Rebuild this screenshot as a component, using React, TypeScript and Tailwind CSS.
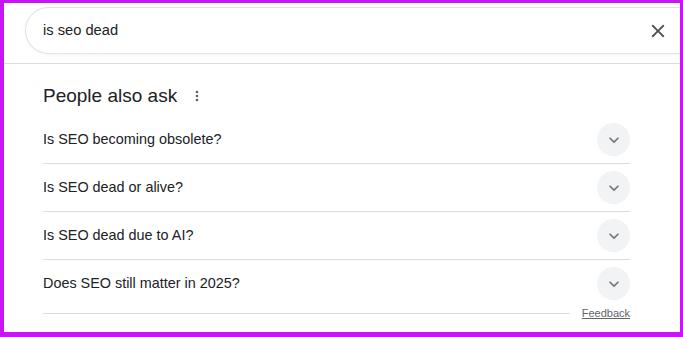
/* ── People also ask – search header + expandable questions ── */

const questions = [
  'Is SEO becoming obsolete?',
  'Is SEO dead or alive?',
  'Is SEO dead due to AI?',
  'Does SEO still matter in 2025?',
];

function CloseIcon() {
  return (
    <svg width="22" height="22" viewBox="0 0 24 24" fill="#4d5156">
      <path d="M19 6.41 17.59 5 12 10.59 6.41 5 5 6.41 10.59 12 5 17.59 6.41 19 12 13.41 17.59 19 19 17.59 13.41 12z" />
    </svg>
  );
}

function MoreIcon() {
  return (
    <svg width="16" height="16" viewBox="0 0 24 24" fill="#5f6368">
      <circle cx="12" cy="6" r="2" />
      <circle cx="12" cy="12" r="2" />
      <circle cx="12" cy="18" r="2" />
    </svg>
  );
}

function ChevronDown() {
  return (
    <svg width="20" height="20" viewBox="0 0 24 24" fill="#70757a">
      <path d="M16.59 8.59 12 13.17 7.41 8.59 6 10l6 6 6-6z" />
    </svg>
  );
}

export default function App() {
  return (
    <div className="h-[337px] w-[683px] overflow-hidden border-t-[3px] border-l-4 border-r-[3px] border-b-[5px] border-[#c815f6] bg-white font-['Liberation_Sans',Arial,sans-serif] text-[#202124]">
      {/* Search header */}
      <div className="h-[61px] border-b border-[#dadce0] pt-[4px]">
        <div className="ml-[21px] flex h-[47px] items-center rounded-l-full border border-r-0 border-[#dfe1e5] pl-[17px] pr-[11px] shadow-[0_1px_4px_rgba(0,0,0,0.04)]">
          <span className="flex-1 text-[14.7px]">is seo dead</span>
          <CloseIcon />
        </div>
      </div>

      {/* People also ask */}
      <div className="pl-[39px] pr-[50px] pt-[18px]">
        <div className="flex h-[28px] items-center">
          <h2 className="text-[19px] leading-[28px]">People also ask</h2>
          <span className="ml-[12px] flex items-center">
            <MoreIcon />
          </span>
        </div>

        <div className="mt-[6px]">
          {questions.map((q, i) => (
            <div
              key={q}
              className={`flex items-center justify-between ${
                i < questions.length - 1
                  ? 'h-[48px] border-b border-[#dadce0]'
                  : 'h-[47px]'
              }`}
            >
              <span className="text-[14.4px]">{q}</span>
              <span className="flex h-[33px] w-[33px] items-center justify-center rounded-full bg-[#f1f3f4]">
                <ChevronDown />
              </span>
            </div>
          ))}
        </div>

        <div className="flex h-[12px] items-center">
          <div className="h-px flex-1 bg-[#dadce0]" />
          <a className="ml-[12px] text-[11px] leading-[12px] text-[#5f6368] underline">
            Feedback
          </a>
        </div>
      </div>
    </div>
  );
}
